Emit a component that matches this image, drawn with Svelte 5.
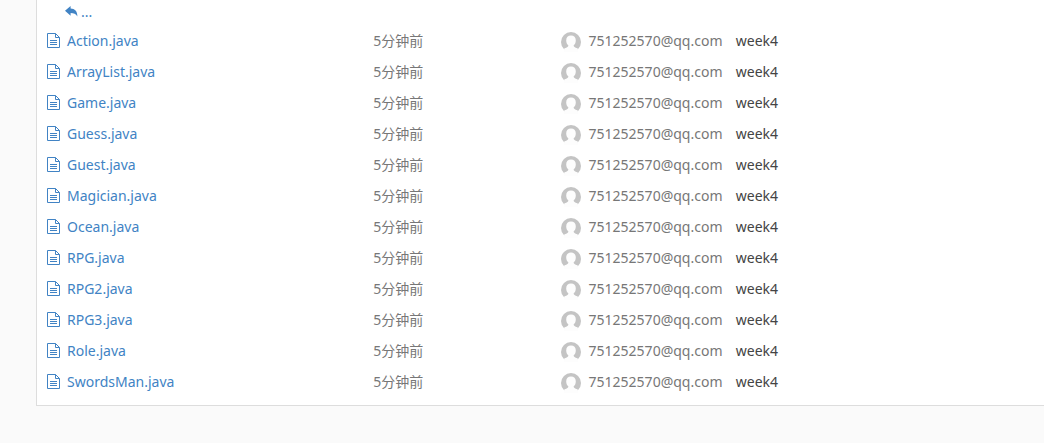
<script lang="ts">
	interface Entry {
		name: string;
		updated: string;
		author: string;
		message: string;
	}

	const names = [
		'Action.java',
		'ArrayList.java',
		'Game.java',
		'Guess.java',
		'Guest.java',
		'Magician.java',
		'Ocean.java',
		'RPG.java',
		'RPG2.java',
		'RPG3.java',
		'Role.java',
		'SwordsMan.java'
	];

	const entries: Entry[] = names.map((name) => ({
		name,
		updated: '5分钟前',
		author: '751252570@qq.com',
		message: 'week4'
	}));
</script>

<main>
	<section class="panel">
		<table>
			<colgroup>
				<col class="col-name" />
				<col class="col-time" />
				<col class="col-author" />
				<col />
			</colgroup>
			<tbody>
				<tr class="parent">
					<td colspan="4">
						<a class="up" href="#parent">
							<svg width="13" height="12" viewBox="0 0 13 12" aria-hidden="true">
								<path d="M0 4.8 5.6 0v2.6C9.8 2.7 12.4 5.2 12.4 10.4 10.8 7.9 8.9 7 5.6 7v2.8z" />
							</svg>
							<span>...</span>
						</a>
					</td>
				</tr>
				{#each entries as entry (entry.name)}
					<tr>
						<td>
							<a class="file" href="#{entry.name}">
								<svg width="13" height="15" viewBox="0 0 13 15" aria-hidden="true">
									<path d="M.5.5h8l4 4v10H.5z" />
									<path d="M8.500.5v4h4M3 7.500h7M3 9.500h7M3 11.500h7" />
								</svg>
								<span>{entry.name}</span>
							</a>
						</td>
						<td class="time">{entry.updated}</td>
						<td>
							<span class="author">
								<svg width="20" height="20" viewBox="0 0 20 20" aria-hidden="true">
									<circle cx="10" cy="10" r="10" fill="#c4c4c4" />
									<path
										d="M10 3.6C7 3.6 5.2 5.6 5.2 8.4c0 2.2.9 4 2.2 5 0 1.2-1 1.700-4.200 3V20h13.600v-3.600c-3.200-1.300-4.200-1.800-4.200-3 1.300-1 2.200-2.800 2.200-5C14.800 5.600 13 3.600 10 3.600z"
										fill="#fdfdfd"
									/>
								</svg>
								<span>{entry.author}</span>
							</span>
						</td>
						<td class="message">{entry.message}</td>
					</tr>
				{/each}
			</tbody>
		</table>
	</section>
</main>

<style>
	:global(body) {
		margin: 0;
		background: #fafafa;
	}

	main {
		padding: 0 0 37px 36px;
		font-family: 'Noto Sans', 'Noto Sans CJK SC', sans-serif;
		font-size: 14px;
		line-height: 20px;
		color: #777;
	}

	.panel {
		padding-bottom: 8px;
		border: solid #ddd;
		border-width: 0 0 1px 1px;
		background: #fff;
	}

	table {
		width: 100%;
		table-layout: fixed;
		border-collapse: collapse;
	}

	.col-name { width: 32.4%; }
	.col-time { width: 18.6%; }
	.col-author { width: 17.4%; }

	td {
		height: 31px;
		padding: 0 0 0 10px;
		white-space: nowrap;
	}

	.parent td {
		height: 23px;
		padding: 0 0 2px 28px;
	}

	a {
		color: #4183c4;
		text-decoration: none;
	}

	a:hover span {
		text-decoration: underline;
	}

	.up,
	.file,
	.author {
		display: flex;
		align-items: center;
	}

	.up {
		gap: 3px;
	}

	.up svg {
		fill: #4183c4;
	}

	.file {
		gap: 7px;
	}

	.file svg {
		fill: none;
		stroke: #4183c4;
	}

	.author {
		gap: 8px;
	}

	.author svg {
		margin-top: 2px;
	}

	.message {
		color: #444;
	}
</style>
